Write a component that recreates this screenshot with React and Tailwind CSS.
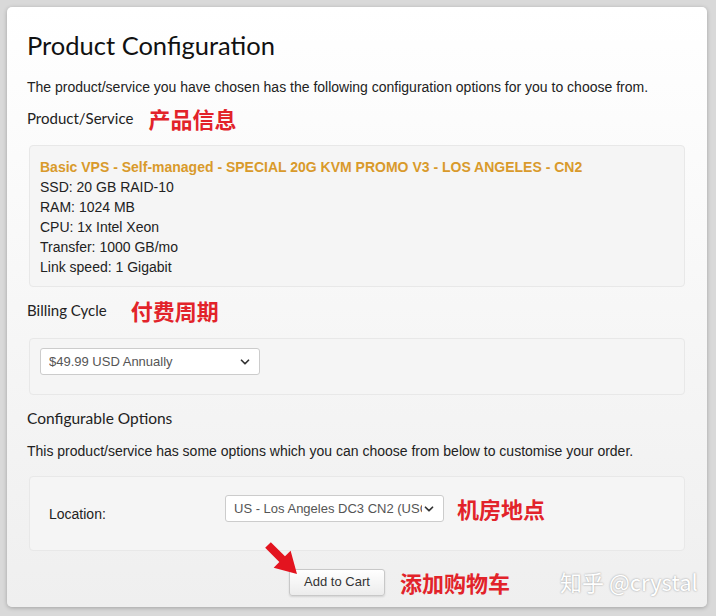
import { ChevronDown } from "lucide-react";

const head = { fontFamily: "Lato, 'Open Sans', sans-serif" };

const Note = ({ children, className = "" }) => (
  <span
    className={`text-[22px] font-bold leading-[28px] text-[#e2232a] ${className}`}
    style={{ fontFamily: "'Noto Sans CJK SC', sans-serif" }}
  >
    {children}
  </span>
);

const FakeSelect = ({ text, className = "" }) => (
  <div
    className={`flex h-[27px] items-center justify-between rounded-[3px] border border-[#cccccc] bg-white pl-2 pr-[7px] text-[13px] text-[#555] ${className}`}
  >
    <span className="overflow-hidden whitespace-nowrap">{text}</span>
    <ChevronDown className="h-[14px] w-[14px] shrink-0 text-[#333]" strokeWidth={3} />
  </div>
);

const App = () => {
  return (
    <div
      className="min-h-[616px] bg-[#d9d9d9] pl-[7px] pt-[7px]"
      style={{ fontFamily: "'Liberation Sans', Arial, sans-serif" }}
    >
      <div className="relative h-[600px] w-[700px] rounded-[5px] bg-gradient-to-b from-white to-[#efefef] px-5 pt-[22px] text-[#222] shadow-[0_1px_4px_rgba(0,0,0,0.25)]">
        <h1 className="text-[25.5px] leading-[32px] text-[#111]" style={head}>
          Product Configuration
        </h1>

        <p className="mt-4 text-[14px] leading-[20px]">
          The product/service you have chosen has the following configuration options for you to choose from.
        </p>

        <div className="mt-[7px] flex items-center gap-[15px]">
          <span className="text-[15px] leading-[28px]" style={head}>Product/Service</span>
          <Note>产品信息</Note>
        </div>

        <div className="mx-[2px] mt-[13px] rounded-[4px] border border-[#e8e8e8] bg-[#f5f5f5] pb-[9px] pl-[10px] pt-[11px] text-[14px] leading-[20px]">
          <div className="font-bold text-[#d99a2b]">
            Basic VPS - Self-managed - SPECIAL 20G KVM PROMO V3 - LOS ANGELES - CN2
          </div>
          <div>SSD: 20 GB RAID-10</div>
          <div>RAM: 1024 MB</div>
          <div>CPU: 1x Intel Xeon</div>
          <div>Transfer: 1000 GB/mo</div>
          <div>Link speed: 1 Gigabit</div>
        </div>

        <div className="mt-[9px] flex items-center gap-6">
          <span className="text-[15px] leading-[28px]" style={head}>Billing Cycle</span>
          <Note>付费周期</Note>
        </div>

        <div className="mx-[2px] mt-[14px] rounded-[4px] border border-[#e8e8e8] bg-[#f5f5f5] pb-[19px] pl-[10px] pt-[9px]">
          <FakeSelect text="$49.99 USD Annually" className="w-[220px]" />
        </div>

        <h3 className="mt-[13px] text-[15.5px] leading-[20px]" style={head}>
          Configurable Options
        </h3>

        <p className="mt-[13px] text-[14px] leading-[20px]">
          This product/service has some options which you can choose from below to customise your order.
        </p>

        <div className="mx-[2px] mt-[15px] flex items-start rounded-[4px] border border-[#e8e8e8] bg-[#f5f5f5] pb-[28px] pl-[19px] pt-[18px]">
          <span className="mt-[11px] w-[176px] text-[14px] leading-[16px]">Location:</span>
          <FakeSelect text="US - Los Angeles DC3 CN2 (USC2)" className="w-[219px]" />
          <Note className="ml-[13px] -mt-[1px]">机房地点</Note>
        </div>

        <div className="mt-[17px] flex items-center pl-[262px]">
          <button className="h-[27px] w-[96px] rounded-[3px] border border-[#c8c8c8] bg-gradient-to-b from-white to-[#ececec] text-[13px] text-[#333] shadow-[0_1px_2px_rgba(0,0,0,0.12)]">
            Add to Cart
          </button>
          <Note className="ml-[15px]">添加购物车</Note>
        </div>

        <svg className="absolute left-[257px] top-[534px]" width="40" height="40" viewBox="0 0 40 40">
          <g transform="translate(4,4) rotate(45)">
            <polygon points="0,-4 20,-4 20,-12 41,0 20,12 20,4 0,4" fill="#e3141f" />
          </g>
        </svg>

        <span
          className="absolute left-[553px] top-[560px] text-[22px] leading-[28px] text-white [text-shadow:0_0_2px_rgba(0,0,0,0.4)]"
          style={{ fontFamily: "'Noto Sans CJK SC', sans-serif" }}
        >
          知乎 @crystal
        </span>
      </div>
    </div>
  );
};

export default App;
